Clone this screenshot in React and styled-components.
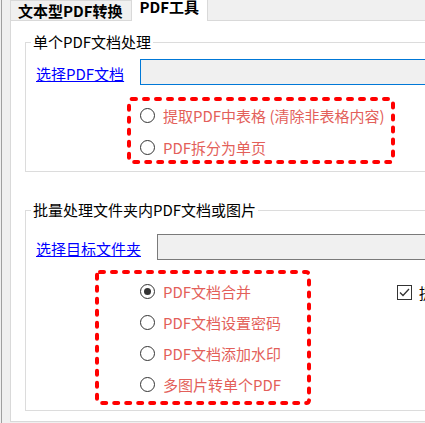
import React from "react";
import styled, { createGlobalStyle } from "styled-components";

const GlobalStyle = createGlobalStyle`
  html, body {
    margin: 0;
    padding: 0;
    background: #f0f0f0;
  }
  body {
    font-family: "Noto Sans CJK SC", "Noto Sans", sans-serif;
    font-size: 15px;
    color: #000;
  }
`;

const Root = styled.div`
  width: 425px;
  height: 423px;
  overflow: hidden;
  background: #f0f0f0;
`;

const Window = styled.div`
  margin-left: 1px;
  height: 100%;
  border-left: 1px solid #a0a0a0;
  padding-left: 8px;
`;

const TabControl = styled.div`
  width: 600px;
`;

const TabStrip = styled.div`
  display: flex;
  align-items: flex-end;
  height: 20px;
`;

const Tab = styled.div`
  box-sizing: border-box;
  height: ${(p) => (p.$active ? "23px" : "20px")};
  margin-bottom: ${(p) => (p.$active ? "-1px" : "0")};
  padding: ${(p) => (p.$active ? "0 8px" : "2px 8px 0 7px")};
  background: ${(p) => (p.$active ? "#ffffff" : "#f0f0f0")};
  border: 1px solid #d9d9d9;
  border-bottom: none;
  border-left: ${(p) => (p.$active ? "none" : "1px solid #d9d9d9")};
  font-weight: 700;
  font-size: 15px;
  line-height: 16px;
  white-space: nowrap;
  position: relative;
  z-index: ${(p) => (p.$active ? 1 : 0)};
`;

const Panel = styled.div`
  background: #ffffff;
  border: 1px solid #d9d9d9;
  padding: 11px 0 10px 14px;
`;

const Group = styled.fieldset`
  margin: ${(p) => p.$top}px 0 0 0;
  padding: 0;
  border: 1px solid #dcdcdc;
  min-width: 0;
`;

const Legend = styled.legend`
  margin-left: 5px;
  padding: 0 2px;
  font-size: 15px;
  line-height: 20px;
`;

const GroupBody = styled.div`
  padding: ${(p) => p.$top}px 0 ${(p) => p.$bottom}px 10px;
`;

const PathRow = styled.div`
  display: flex;
  align-items: center;
  height: 26px;
  gap: 16px;
`;

const PickLink = styled.a`
  color: #0000ff;
  text-decoration: underline;
  font-size: 15px;
  white-space: nowrap;
  cursor: pointer;
  margin-top: 2px;
`;

const PathBox = styled.div`
  flex: 1;
  box-sizing: border-box;
  height: 26px;
  background: #f0f0f0;
  border: 1px solid ${(p) => (p.$focused ? "#0078d7" : "#7a7a7a")};
`;

const OptionsRow = styled.div`
  display: flex;
  align-items: flex-start;
  margin-top: ${(p) => p.$gap}px;
  margin-left: ${(p) => p.$indent}px;
`;

const Marked = styled.div`
  position: relative;
  box-sizing: border-box;
  width: ${(p) => p.$w}px;
  height: ${(p) => p.$h}px;
  padding: ${(p) => p.$pt}px 0 0 ${(p) => p.$pl}px;
  flex-shrink: 0;
`;

const DashSvg = styled.svg`
  position: absolute;
  left: 0;
  top: 0;
  pointer-events: none;
`;

const RadioRow = styled.label`
  display: flex;
  align-items: center;
  gap: 8px;
  height: ${(p) => p.$h}px;
  color: #e35f5a;
  font-size: 15px;
  white-space: nowrap;
`;

const RadioDot = styled.span`
  box-sizing: border-box;
  width: 15px;
  height: 15px;
  border-radius: 50%;
  border: 1px solid #333333;
  background: #ffffff;
  display: flex;
  align-items: center;
  justify-content: center;
  flex-shrink: 0;
  &::after {
    content: "";
    width: 7px;
    height: 7px;
    border-radius: 50%;
    background: ${(p) => (p.$checked ? "#333333" : "transparent")};
  }
`;

const CheckRow = styled.label`
  display: flex;
  align-items: center;
  gap: 7px;
  margin: 12px 0 0 86px;
  font-size: 15px;
  white-space: nowrap;
`;

const CheckBox = styled.span`
  box-sizing: border-box;
  width: 15px;
  height: 15px;
  border: 1px solid #333333;
  background: #ffffff;
  display: flex;
  align-items: center;
  justify-content: center;
`;

const DashedFrame = ({ w, h, pt, pl, children }) => (
  <Marked $w={w} $h={h} $pt={pt} $pl={pl}>
    <DashSvg width={w} height={h}>
      <rect
        x="2"
        y="2"
        width={w - 4}
        height={h - 4}
        rx="3"
        fill="none"
        stroke="#ff0000"
        strokeWidth="4"
        strokeLinecap="round"
        strokeDasharray="4 8"
      />
    </DashSvg>
    {children}
  </Marked>
);

const Radio = ({ label, checked, h }) => (
  <RadioRow $h={h}>
    <RadioDot $checked={checked} />
    {label}
  </RadioRow>
);

const App = () => {
  return (
    <Root>
      <GlobalStyle />
      <Window>
        <TabControl>
          <TabStrip>
            <Tab>文本型PDF转换</Tab>
            <Tab $active>PDF工具</Tab>
          </TabStrip>
          <Panel>
            <Group $top={0}>
              <Legend>单个PDF文档处理</Legend>
              <GroupBody $top={7} $bottom={7}>
                <PathRow>
                  <PickLink>选择PDF文档</PickLink>
                  <PathBox $focused />
                </PathRow>
                <OptionsRow $gap={12} $indent={91}>
                  <DashedFrame w={268} h={67} pt={2} pl={13}>
                    <Radio h={32} label="提取PDF中表格 (清除非表格内容)" />
                    <Radio h={32} label="PDF拆分为单页" />
                  </DashedFrame>
                </OptionsRow>
              </GroupBody>
            </Group>
            <Group $top={28}>
              <Legend>批量处理文件夹内PDF文档或图片</Legend>
              <GroupBody $top={14} $bottom={5}>
                <PathRow>
                  <PickLink>选择目标文件夹</PickLink>
                  <PathBox />
                </PathRow>
                <OptionsRow $gap={10} $indent={59}>
                  <DashedFrame w={216} h={135} pt={6} pl={45}>
                    <Radio h={31} checked label="PDF文档合并" />
                    <Radio h={31} label="PDF文档设置密码" />
                    <Radio h={31} label="PDF文档添加水印" />
                    <Radio h={31} label="多图片转单个PDF" />
                  </DashedFrame>
                  <CheckRow>
                    <CheckBox>
                      <svg width="11" height="9" viewBox="0 0 11 9">
                        <path
                          d="M1 4.5 L4 7.5 L10 1"
                          fill="none"
                          stroke="#333333"
                          strokeWidth="1.3"
                        />
                      </svg>
                    </CheckBox>
                    提取合并书签
                  </CheckRow>
                </OptionsRow>
              </GroupBody>
            </Group>
          </Panel>
        </TabControl>
      </Window>
    </Root>
  );
};

export default App;
